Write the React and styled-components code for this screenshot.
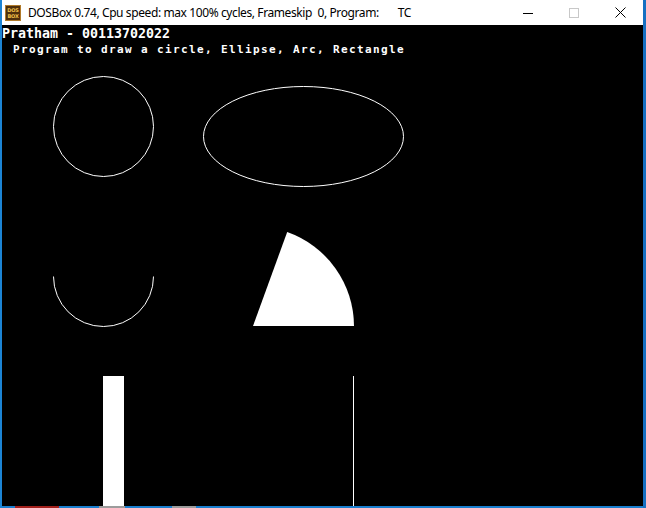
import React from "react";
import styled, { createGlobalStyle } from "styled-components";

const GlobalStyle = createGlobalStyle`
  html, body {
    margin: 0;
    padding: 0;
    background: #000;
  }
`;

const Window = styled.div`
  width: 646px;
  height: 508px;
  box-sizing: border-box;
  display: flex;
  flex-direction: column;
  border-left: 2px solid #1c84d4;
  border-right: 3px solid #1670c2;
  background: #000;
`;

const TitleBar = styled.div`
  height: 25px;
  flex: none;
  display: flex;
  align-items: center;
  background: #fff;
  font-family: "Noto Sans", "Open Sans", sans-serif;
  font-size: 12px;
  color: #000;
`;

const AppIcon = styled.div`
  width: 16px;
  height: 16px;
  box-sizing: border-box;
  margin: 0 7px 0 3px;
  background: #4e2f0c;
  border: 1px solid #b07a2a;
  display: flex;
  flex-direction: column;
  align-items: center;
  justify-content: center;
  font-family: "DejaVu Sans", sans-serif;
  font-weight: bold;
  font-size: 5px;
  line-height: 6px;
  color: #f2c24a;
  letter-spacing: -0.2px;
`;

const Caption = styled.div`
  white-space: pre;
  line-height: 25px;
  letter-spacing: -0.4px;
`;

const ProgramName = styled.div`
  margin-left: 19px;
  line-height: 25px;
  letter-spacing: -0.4px;
`;

const Controls = styled.div`
  margin-left: auto;
  display: flex;
  height: 25px;
`;

const ControlButton = styled.div`
  width: 46px;
  height: 25px;
  display: flex;
  align-items: center;
  justify-content: center;
`;

const Screen = styled.div`
  flex: 1;
  position: relative;
  background: #000;
  color: #fff;
  overflow: hidden;
`;

const ConsoleLine = styled.div`
  font-family: "DejaVu Sans Mono", "Liberation Mono", monospace;
  font-weight: bold;
  font-size: 13.3px;
  line-height: 16px;
  height: 16px;
  margin-top: 1px;
  white-space: pre;
`;

const GraphText = styled.div`
  font-family: "DejaVu Sans Mono", "Liberation Mono", monospace;
  font-weight: bold;
  font-size: 11px;
  letter-spacing: 1.38px;
  line-height: 10px;
  height: 10px;
  margin-top: 3px;
  padding-left: 11px;
  white-space: pre;
`;

const Canvas = styled.svg`
  position: absolute;
  left: 0;
  top: 0;
  width: 641px;
  height: 481px;
`;

const BottomEdge = styled.div`
  height: 2px;
  flex: none;
  background: #1a7fcf;
  display: flex;
`;

const TaskbarBit = styled.div`
  height: 2px;
  width: ${({ w }) => w}px;
  margin-left: ${({ at }) => at}px;
  background: ${({ color }) => color};
`;

export default function App() {
  const a = (70 * Math.PI) / 180;
  const ex = 250 + 100 * Math.cos(a);
  const ey = 300 - 100 * Math.sin(a);

  return (
    <>
      <GlobalStyle />
      <Window>
        <TitleBar>
          <AppIcon>
            <span>DOS</span>
            <span>BOX</span>
          </AppIcon>
          <Caption>DOSBox 0.74, Cpu speed: max 100% cycles, Frameskip  0, Program:</Caption>
          <ProgramName>TC</ProgramName>
          <Controls>
            <ControlButton>
              <svg width="10" height="10" viewBox="0 0 10 10">
                <rect x="0" y="5" width="10" height="1" fill="#000" />
              </svg>
            </ControlButton>
            <ControlButton>
              <svg width="10" height="10" viewBox="0 0 10 10">
                <rect x="0.5" y="0.5" width="9" height="9" fill="none" stroke="#c8c8c8" />
              </svg>
            </ControlButton>
            <ControlButton>
              <svg width="11" height="11" viewBox="0 0 11 11">
                <path d="M0.5 0.5 L10.5 10.5 M10.5 0.5 L0.5 10.5" stroke="#000" strokeWidth="1" />
              </svg>
            </ControlButton>
          </Controls>
        </TitleBar>
        <Screen>
          <ConsoleLine>Pratham - 00113702022</ConsoleLine>
          <GraphText>Program to draw a circle, Ellipse, Arc, Rectangle</GraphText>
          <Canvas viewBox="0 0 641 481">
            <g transform="translate(1.5 1.5)" fill="none" stroke="#fff" strokeWidth="1">
              <circle cx="100" cy="100" r="50" />
              <ellipse cx="300" cy="110" rx="100" ry="50" />
              <path d="M50 250 A50 50 0 0 0 150 250" />
            </g>
            <g transform="translate(1 1)" fill="#fff">
              <path d={`M250 300 L351 300 A100 100 0 0 0 ${ex.toFixed(1)} ${ey.toFixed(1)} Z`} />
              <rect x="100" y="350" width="21" height="140" />
              <rect x="350" y="350" width="1" height="140" />
            </g>
          </Canvas>
        </Screen>
        <BottomEdge>
          <TaskbarBit at={13} w={44} color="#a3201c" />
          <TaskbarBit at={40} w={26} color="#9c9c9c" />
          <TaskbarBit at={47} w={24} color="#9c9c9c" />
        </BottomEdge>
      </Window>
    </>
  );
}
